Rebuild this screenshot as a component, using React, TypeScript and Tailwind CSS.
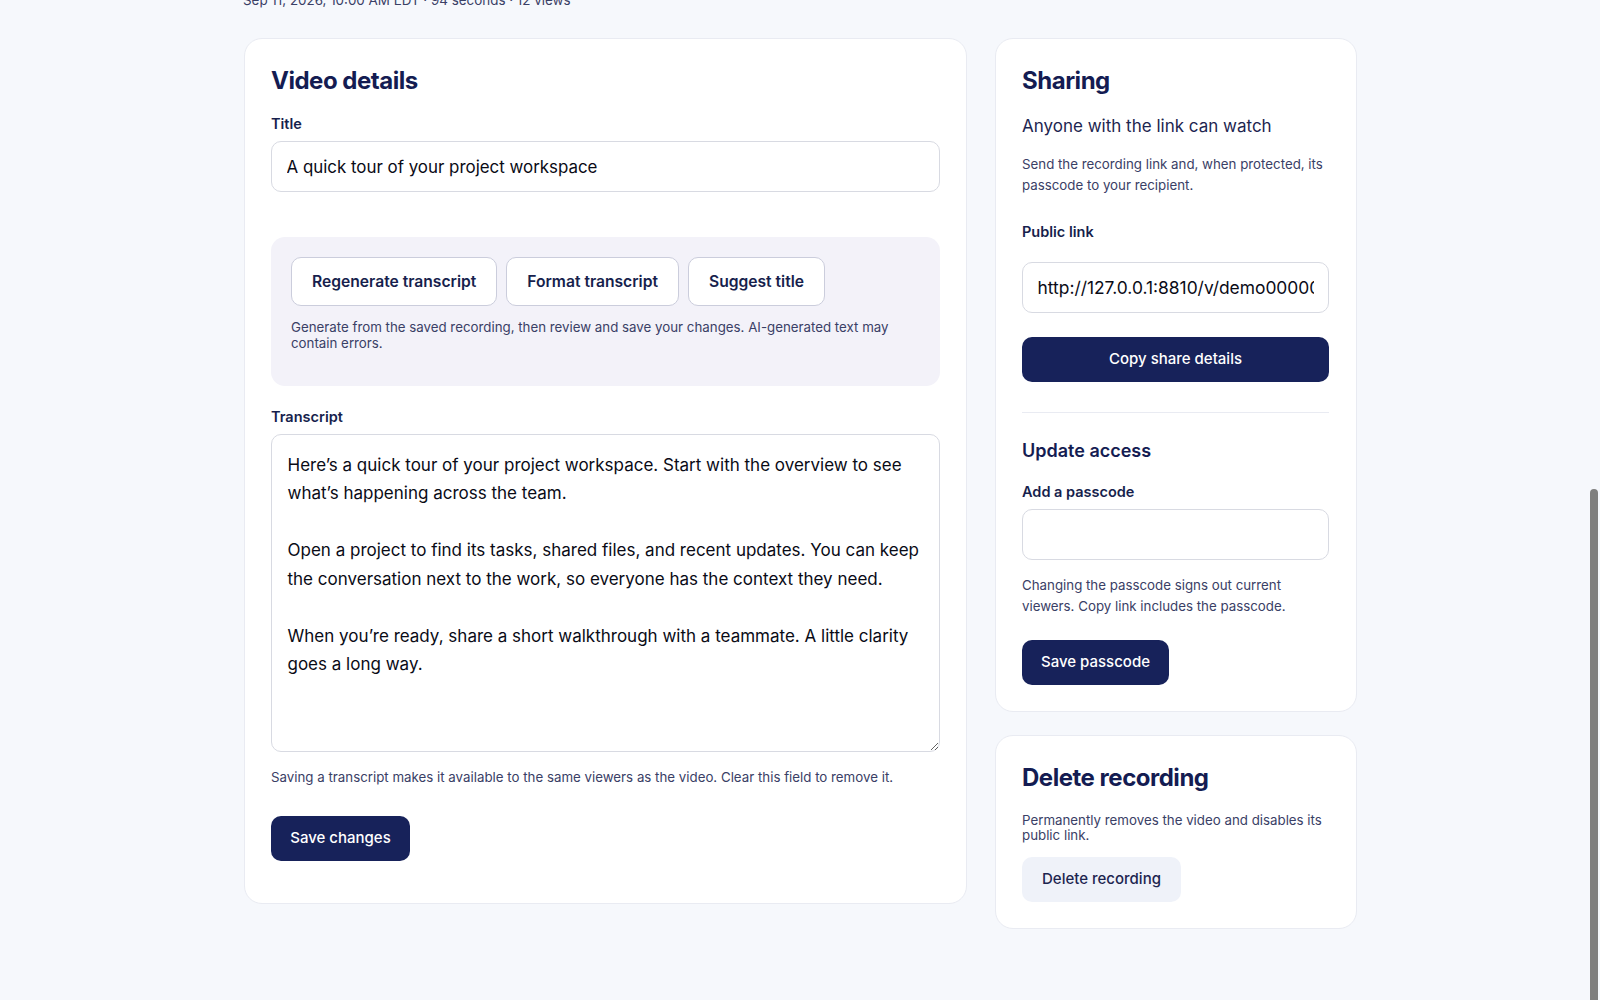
export default function App() {
  const primary = "flex items-center justify-center rounded-[10px] bg-[#17225a] text-[15px] font-medium text-white h-[45px]";
  const label = "block text-[14.5px] font-semibold text-[#171f4d] leading-[18px]";
  const small = "text-[13.3px] text-[#3a4066]";
  const ghost = "flex h-[49px] items-center rounded-[10px] border-[1.5px] border-[#cbcddc] bg-white px-[20px] text-[15.65px] font-[575] text-[#171f4d]";
  const input = "block w-full rounded-[10px] border-[1.5px] border-[#d8dae2] bg-white px-[14.5px] text-[#0a0b16] outline-none";
  const h2 = "text-[24px] font-bold leading-[30px] tracking-[-0.02em] text-[#141c52]";
  return (
    <div className="relative h-screen overflow-hidden bg-[#f6f8fc] [font-family:Inter,'Liberation_Sans',sans-serif]">
      <div className="mx-auto w-[1114px] -mt-[9px]">
        <p className={"h-[18px] text-[13.4px] leading-[18px] text-[#3a4066]"}>Sep 11, 2026, 10:00 AM EDT · 94 seconds · 12 views</p>
        <div className="mt-[29px] grid grid-cols-[724px_362px] gap-[28px] items-start">
          <section className="ml-[1px] h-[866px] rounded-[18px] border border-[#e9ebf2] bg-white px-[26px] pt-[27px]">
            <h2 className={h2}>Video details</h2>
            <label className={"mt-[19px] " + label}>Title</label>
            <input readOnly value="A quick tour of your project workspace" className={"mt-[8px] h-[51px] text-[16.9px] " + input} />
            <div className="mt-[45px] h-[149px] rounded-[14px] bg-[#f3f2f9] px-[20px] pt-[20px]">
              <div className="flex gap-[9px]">
                <button className={ghost}>Regenerate transcript</button>
                <button className={ghost}>Format transcript</button>
                <button className={ghost}>Suggest title</button>
              </div>
              <p className={"mt-[14px] leading-[15.5px] " + small}>Generate from the saved recording, then review and save your changes. AI-generated text may contain errors.</p>
            </div>
            <label className={"mt-[22px] " + label}>Transcript</label>
            <textarea
              readOnly
              className={"mt-[8px] h-[318px] resize-y py-[15.5px] !px-[15.5px] text-[17px] leading-[28.5px] " + input}
              value={"Here’s a quick tour of your project workspace. Start with the overview to see what’s happening across the team.\n\nOpen a project to find its tasks, shared files, and recent updates. You can keep the conversation next to the work, so everyone has the context they need.\n\nWhen you’re ready, share a short walkthrough with a teammate. A little clarity goes a long way."}
            />
            <p className={"mt-[15px] leading-[21px] " + small}>Saving a transcript makes it available to the same viewers as the video. Clear this field to remove it.</p>
            <button className={"mt-[27.5px] w-[139px] " + primary}>Save changes</button>
          </section>
          <div className="flex flex-col gap-[23px]">
            <section className="h-[674px] rounded-[18px] border border-[#e9ebf2] bg-white pl-[26px] pr-[27px] pt-[27px]">
              <h2 className={h2}>Sharing</h2>
              <p className="mt-[15px] text-[17px] leading-[30px] text-[#1d2550]">Anyone with the link can watch</p>
              <p className={"mt-[13px] leading-[21px] " + small}>Send the recording link and, when protected, its passcode to your recipient.</p>
              <label className={"mt-[27px] " + label}>Public link</label>
              <input readOnly value="http://127.0.0.1:8810/v/demo0000000000" className={"mt-[21px] h-[51px] text-[17.4px] " + input} />
              <button className={"mt-[23.5px] w-full " + primary}>Copy share details</button>
              <hr className="mt-[30.5px] border-[#e9ebf2]" />
              <h3 className="mt-[26px] text-[18px] font-semibold leading-[24px] text-[#141c52]">Update access</h3>
              <label className={"mt-[20px] " + label}>Add a passcode</label>
              <input readOnly className={"mt-[8px] h-[51px] text-[17px] " + input} />
              <p className={"mt-[15px] leading-[21px] " + small}>Changing the passcode signs out current viewers. Copy link includes the passcode.</p>
              <button className={"mt-[22.5px] w-[147px] " + primary}>Save passcode</button>
            </section>
            <section className="h-[194px] rounded-[18px] border border-[#e9ebf2] bg-white pl-[26px] pr-[27px] pt-[27px]">
              <h2 className={h2}>Delete recording</h2>
              <p className={"mt-[19.5px] leading-[15.5px] " + small}>Permanently removes the video and disables its public link.</p>
              <button className="mt-[13px] flex h-[45px] w-[159px] items-center justify-center rounded-[10px] bg-[#eff2f9] text-[15px] font-medium text-[#1d2550]">Delete recording</button>
            </section>
          </div>
        </div>
      </div>
      <div className="absolute right-[2px] top-[489px] bottom-[-20px] w-[8px] rounded-full bg-[#7f7f7f]" />
    </div>
  );
}
